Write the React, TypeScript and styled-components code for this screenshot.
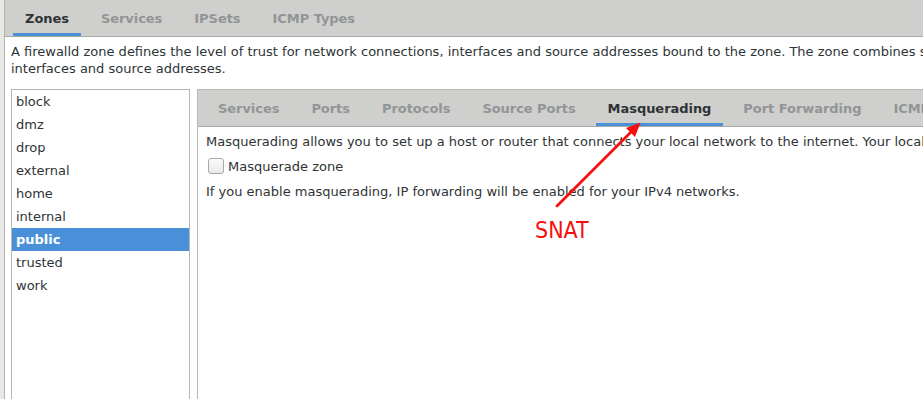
import React from 'react'
import styled, { createGlobalStyle } from 'styled-components'

const zones = ['block', 'dmz', 'drop', 'external', 'home', 'internal', 'public', 'trusted', 'work']
const topTabs = ['Zones', 'Services', 'IPSets', 'ICMP Types']
const zoneTabs = [
  'Services',
  'Ports',
  'Protocols',
  'Source Ports',
  'Masquerading',
  'Port Forwarding',
  'ICMP Filter',
  'Rich Rules',
]

export default function App() {
  return (
    <Page>
      <GlobalStyle />
      <Strip />
      <Main>
        <TabBar>
          {topTabs.map(t => (
            <Tab key={t} $active={t === 'Zones'}>
              {t}
            </Tab>
          ))}
        </TabBar>

        <Body>
          <Description>
            A firewalld zone defines the level of trust for network connections, interfaces and source
            addresses bound to the zone. The zone combines services, ports, protocols, masquerading,
            port/packet forwarding, icmp filters and rich rules. The zone can be bound to
            <br />
            interfaces and source addresses.
          </Description>

          <Split>
            <ZoneList>
              {zones.map(z => (
                <ZoneRow key={z} $selected={z === 'public'}>
                  {z}
                </ZoneRow>
              ))}
            </ZoneList>

            <Notebook>
              <TabBar>
                {zoneTabs.map(t => (
                  <Tab key={t} $active={t === 'Masquerading'}>
                    {t}
                  </Tab>
                ))}
              </TabBar>
              <Pane>
                <Line>
                  Masquerading allows you to set up a host or router that connects your local network to the
                  internet. Your local network will not be visible and the hosts appear as a single address
                  on the internet.
                </Line>
                <CheckRow>
                  <Check />
                  Masquerade zone
                </CheckRow>
                <Line>If you enable masquerading, IP forwarding will be enabled for your IPv4 networks.</Line>
              </Pane>
            </Notebook>
          </Split>
        </Body>
      </Main>

      <Arrow width="923" height="399" viewBox="0 0 923 399">
        <line x1="557" y1="206" x2="632" y2="131" stroke="#f51010" strokeWidth="2.8" strokeLinecap="round" />
        <polygon points="640.5,122.5 635,137 626,128" fill="#f51010" />
      </Arrow>
      <Label>SNAT</Label>
    </Page>
  )
}

const GlobalStyle = createGlobalStyle`
  html, body {
    margin: 0;
    overflow: hidden;
    background: #ffffff;
  }
  body {
    font-family: "DejaVu Sans", "Noto Sans", sans-serif;
    font-size: 13px;
    color: #2e3436;
  }
`

const Page = styled.div`
  position: relative;
  display: flex;
  width: 1200px;
  height: 420px;
`

const Strip = styled.div`
  width: 4px;
  flex: none;
  background: #e8e8e7;
  border-right: 1px solid #b3b3b0;
`

const Main = styled.div`
  flex: 1;
  display: flex;
  flex-direction: column;
  min-width: 0;
`

const TabBar = styled.div`
  display: flex;
  gap: 8px;
  height: 36px;
  padding-left: 8px;
  background: #cfcfcd;
  border-bottom: 1px solid #a9a9a7;
  flex: none;
  overflow: hidden;
`

const Tab = styled.div<{ $active?: boolean }>`
  flex: none;
  display: flex;
  align-items: center;
  padding: 0 12px;
  white-space: nowrap;
  font-weight: bold;
  font-size: 13px;
  letter-spacing: -0.05px;
  color: ${p => (p.$active ? '#2e3436' : '#929595')};
  box-shadow: ${p => (p.$active ? 'inset 0 -3px 0 #4a90d9' : 'none')};
`

const Body = styled.div`
  flex: 1;
  display: flex;
  flex-direction: column;
  padding: 6px 0 0 6px;
  background: #ffffff;
`

const Description = styled.div`
  line-height: 17px;
  white-space: nowrap;
  margin-bottom: 12px;
`

const Split = styled.div`
  flex: 1;
  display: flex;
  gap: 7px;
`

const ZoneList = styled.div`
  width: 177px;
  flex: none;
  border: 1px solid #b6b6b3;
  border-bottom: none;
  background: #ffffff;
`

const ZoneRow = styled.div<{ $selected?: boolean }>`
  height: 23px;
  line-height: 23px;
  padding-left: 4px;
  background: ${p => (p.$selected ? '#4a90d9' : 'transparent')};
  color: ${p => (p.$selected ? '#ffffff' : '#2e3436')};
  font-weight: ${p => (p.$selected ? 'bold' : 'normal')};
`

const Notebook = styled.div`
  flex: 1;
  min-width: 0;
  display: flex;
  flex-direction: column;
  border: 1px solid #b6b6b3;
  border-bottom: none;
  border-right: none;
`

const Pane = styled.div`
  display: flex;
  flex-direction: column;
  gap: 7px;
  padding: 6px 0 0 8px;
`

const Line = styled.div`
  line-height: 17px;
  white-space: nowrap;
`

const CheckRow = styled.label`
  display: flex;
  align-items: center;
  gap: 4px;
  height: 18px;
  padding-left: 2px;
  margin-bottom: 1px;
`

const Check = styled.span`
  width: 14px;
  height: 14px;
  border: 1px solid #a9a9a7;
  border-radius: 3px;
  background: linear-gradient(#fbfbfb, #e8e8e7);
`

const Arrow = styled.svg`
  position: absolute;
  left: 0;
  top: 0;
  pointer-events: none;
`

const Label = styled.div`
  position: absolute;
  left: 535px;
  top: 219px;
  font-family: "DejaVu Sans Condensed", "DejaVu Sans", sans-serif;
  font-stretch: condensed;
  font-size: 23px;
  line-height: 23px;
  color: #f51010;
`
